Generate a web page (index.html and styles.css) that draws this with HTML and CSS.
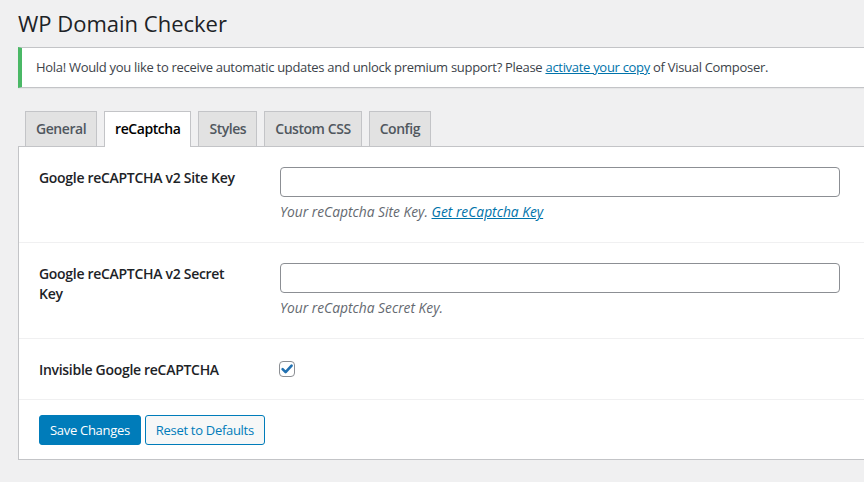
FILE: index.html
```html
<!DOCTYPE html>
<html lang="en">
<head>
    <meta charset="UTF-8">
    <meta name="viewport" content="width=device-width, initial-scale=1.0">
    <title>WP Domain Checker</title>
    <link rel="stylesheet" href="styles.css">
</head>
<body>

    <div class="wrap">
        <h1>WP Domain Checker</h1>

        <div class="notice">
            <p>Hola! Would you like to receive automatic updates and unlock premium support? Please <a href="#">activate your copy</a> of Visual Composer.</p>
        </div>

        <nav class="tabs">
            <a href="#" class="tab">General</a>
            <a href="#" class="tab tab-active">reCaptcha</a>
            <a href="#" class="tab">Styles</a>
            <a href="#" class="tab">Custom CSS</a>
            <a href="#" class="tab">Config</a>
        </nav>

        <form class="panel">
            <div class="row">
                <label class="row-label" for="site-key">Google reCAPTCHA v2 Site Key</label>
                <div class="row-field">
                    <input type="text" id="site-key" class="text-input">
                    <p class="description">Your reCaptcha Site Key. <a href="#">Get reCaptcha Key</a></p>
                </div>
            </div>

            <div class="row">
                <label class="row-label" for="secret-key">Google reCAPTCHA v2 Secret Key</label>
                <div class="row-field">
                    <input type="text" id="secret-key" class="text-input">
                    <p class="description">Your reCaptcha Secret Key.</p>
                </div>
            </div>

            <div class="row row-short">
                <label class="row-label" for="invisible">Invisible Google reCAPTCHA</label>
                <div class="row-field">
                    <span class="checkbox" id="invisible">
                        <svg viewBox="0 0 16 16" width="16" height="16">
                            <path d="M3.6 8.2 L6.6 11.2 L12.6 4.6" fill="none" stroke="#2271b1" stroke-width="2.6" stroke-linecap="round" stroke-linejoin="round"/>
                        </svg>
                    </span>
                </div>
            </div>

            <div class="actions">
                <button type="button" class="button button-primary">Save Changes</button>
                <button type="button" class="button">Reset to Defaults</button>
            </div>
        </form>
    </div>

</body>
</html>
```

FILE: styles.css
```css
body {
    margin: 0;
    background-color: #f0f0f1;
    font-family: "Open Sans", "Noto Sans", Arial, sans-serif;
    font-size: 13px;
    letter-spacing: -0.3px;
    color: #3c434a;
    overflow: hidden;
}

a {
    color: #0073aa;
}

.wrap {
    padding: 8px 0 0 18px;
    margin-right: -30px;
}

h1 {
    margin: 0;
    font-size: 22px;
    font-weight: 400;
    line-height: 30px;
    letter-spacing: 0;
    color: #1d2327;
}

.notice {
    margin-top: 9px;
    background: white;
    border: 1px solid #c3c4c7;
    border-left: 4px solid #4ab866;
    box-shadow: 0 1px 1px rgba(0, 0, 0, 0.04);
    padding: 0 14px;
}

.notice p {
    margin: 0;
    padding: 10px 0;
    line-height: 19px;
}

.tabs {
    display: flex;
    gap: 7px;
    margin-top: 23px;
    padding-left: 7px;
}

.tab {
    display: block;
    height: 34px;
    line-height: 34px;
    padding: 0 10px;
    border: 1px solid #c3c4c7;
    border-bottom: none;
    background: #e2e2e2;
    color: #50575e;
    font-size: 14px;
    font-weight: 600;
    letter-spacing: -0.45px;
    text-decoration: none;
}

.tab-active {
    background: white;
    color: #000;
    height: 35px;
    margin-bottom: -1px;
    position: relative;
}

.panel {
    background: white;
    border: 1px solid #c3c4c7;
}

.row {
    display: flex;
    padding: 20px 0 20px 20px;
    border-bottom: 1px solid #f0f0f1;
}

.row-short {
    padding-bottom: 19px;
}

.row-label {
    width: 241px;
    flex-shrink: 0;
    padding-top: 1px;
    padding-right: 40px;
    box-sizing: border-box;
    font-size: 14px;
    font-weight: 600;
    line-height: 20px;
    color: #1d2327;
}

.text-input {
    display: block;
    width: 560px;
    height: 30px;
    box-sizing: border-box;
    margin: 0;
    border: 1px solid #8c8f94;
    border-radius: 4px;
    background: white;
}

.description {
    margin: 4px 0 0;
    font-size: 13.8px;
    font-style: italic;
    letter-spacing: 0;
    line-height: 21px;
    color: #646970;
}

.checkbox {
    display: block;
    width: 16px;
    height: 16px;
    margin-top: 2px;
    margin-left: -1px;
    box-sizing: border-box;
    border: 1px solid #8c8f94;
    border-radius: 4px;
    position: relative;
}

.checkbox svg {
    position: absolute;
    top: -1px;
    left: -1px;
}

.actions {
    display: flex;
    gap: 4px;
    padding: 15px 20px 14px;
}

.button {
    height: 30px;
    padding: 0 10px;
    border: 1px solid #007cba;
    border-radius: 3px;
    background: #f6f7f7;
    color: #007cba;
    font-family: inherit;
    font-size: 13px;
    letter-spacing: -0.3px;
    cursor: pointer;
}

.button-primary {
    background: #007cba;
    color: white;
}
```
